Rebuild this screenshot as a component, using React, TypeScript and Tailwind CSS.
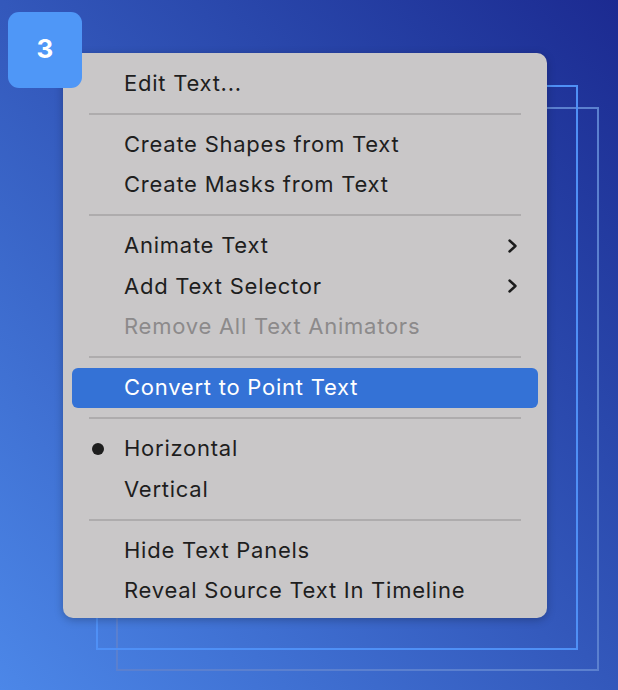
import React from 'react';

type Item =
  | { kind: 'sep' }
  | { kind: 'item'; label: string; submenu?: boolean; disabled?: boolean; active?: boolean; checked?: boolean };

const MENU: Item[] = [
  { kind: 'item', label: 'Edit Text...' },
  { kind: 'sep' },
  { kind: 'item', label: 'Create Shapes from Text' },
  { kind: 'item', label: 'Create Masks from Text' },
  { kind: 'sep' },
  { kind: 'item', label: 'Animate Text', submenu: true },
  { kind: 'item', label: 'Add Text Selector', submenu: true },
  { kind: 'item', label: 'Remove All Text Animators', disabled: true },
  { kind: 'sep' },
  { kind: 'item', label: 'Convert to Point Text', active: true },
  { kind: 'sep' },
  { kind: 'item', label: 'Horizontal', checked: true },
  { kind: 'item', label: 'Vertical' },
  { kind: 'sep' },
  { kind: 'item', label: 'Hide Text Panels' },
  { kind: 'item', label: 'Reveal Source Text In Timeline' },
];

const Chevron = () => (
  <svg width="12" height="16" viewBox="0 0 12 16" fill="none">
    <path d="M3.5 2.5 L9.5 8 L3.5 13.5" stroke="#1c1c1c" strokeWidth="2.4" strokeLinecap="round" strokeLinejoin="round" />
  </svg>
);

const App: React.FC = () => {
  return (
    <div
      className="relative w-[618px] h-[690px] overflow-hidden bg-gradient-to-tr from-[#4c87e8] via-[#3358bb] to-[#1c2a91] pl-[63px] pt-[53px]"
      style={{ fontFamily: 'Inter, "Liberation Sans", Arial, sans-serif' }}
    >
      {/* decorative frames behind the menu */}
      <div className="absolute left-[116px] top-[107px] w-[483px] h-[564px] border-2 border-[#5b80cf]" />
      <div className="absolute left-[96px] top-[85px] w-[482px] h-[565px] border-2 border-[#4f90f6]" />

      {/* step badge */}
      <div className="absolute left-[8px] top-[12px] z-20 w-[74px] h-[76px] rounded-[11px] bg-[#4f97f7] flex items-center justify-center pb-[4px] text-white text-[26px] font-bold">
        3
      </div>

      <div className="relative z-10 w-[484px] h-[565px] rounded-[10px] bg-[#c9c7c8] pt-[10px] shadow-[0_2px_8px_rgba(0,0,0,0.25)]">
        {MENU.map((it, i) =>
          it.kind === 'sep' ? (
            <div key={i} className="h-[20.5px] flex items-center px-[26px]">
              <div className="w-full h-[2px] bg-[#aeacad]" />
            </div>
          ) : (
            <div
              key={i}
              className={`relative h-[40.5px] mx-[9px] rounded-[6px] flex items-center pl-[52px] pr-[20px] text-[22px] tracking-[0.75px] ${
                it.active ? 'bg-[#3472d6] text-white' : it.disabled ? 'text-[#8c8a8b]' : 'text-[#1e1e1e]'
              }`}
            >
              {it.checked && <span className="absolute left-[20px] w-[12px] h-[12px] rounded-full bg-[#1e1e1e]" />}
              <span className="flex-1">{it.label}</span>
              {it.submenu && <Chevron />}
            </div>
          )
        )}
      </div>
    </div>
  );
};

export default App;
